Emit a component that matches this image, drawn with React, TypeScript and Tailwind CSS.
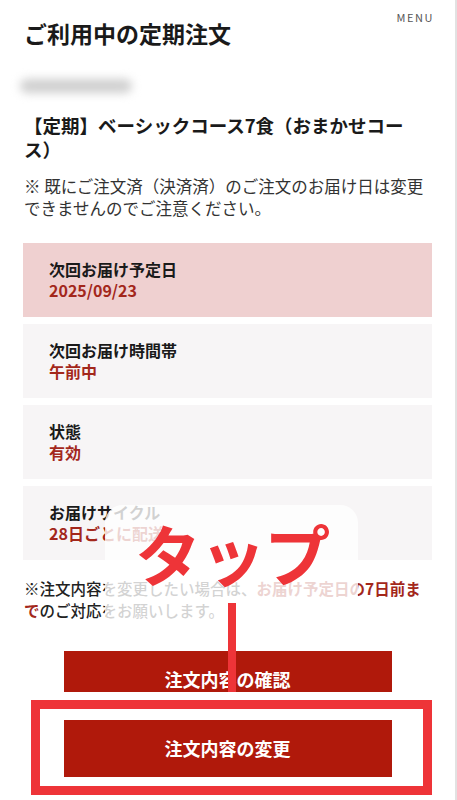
import React from "react";

type Row = { label: string; value: string; highlight?: boolean };

const rows: Row[] = [
  { label: "次回お届け予定日", value: "2025/09/23", highlight: true },
  { label: "次回お届け時間帯", value: "午前中" },
  { label: "状態", value: "有効" },
  { label: "お届けサイクル", value: "28日ごとに配送" },
];

const jp = { fontFamily: '"Noto Sans CJK JP", "Noto Sans", sans-serif' };

export default function App() {
  return (
    <div
      className="relative w-[457px] h-[800px] overflow-hidden bg-white border-r-2 border-[#e2e2e2] text-[#222]"
      style={jp}
    >
      {/* Header */}
      <div className="relative px-6">
        <span className="absolute top-[11px] right-[21px] text-[11px] leading-[12px] tracking-[0.14em] text-[#555]">
          MENU
        </span>
        <h1 className="pt-[20px] text-[23px] leading-[26px] font-bold text-[#1a1a1a]">
          ご利用中の定期注文
        </h1>
      </div>

      <div className="px-6">
        {/* order number (masked) */}
        <div className="mt-[33px] -ml-1 w-[112px] h-[14px] rounded-full bg-[#cfcfcf] blur-[5px]" />

        <h2 className="mt-[20px] w-[390px] text-[18.5px] leading-[24px] font-bold text-[#1a1a1a]">
          【定期】ベーシックコース7食（おまかせコース）
        </h2>

        <p className="mt-[14px] text-[16.5px] leading-[22px] text-[#333]">
          ※ 既にご注文済（決済済）のご注文のお届け日は変更できませんのでご注意ください。
        </p>
      </div>

      {/* Subscription details */}
      <div className="mt-[24px] mx-[23px] flex flex-col gap-[7px]">
        {rows.map((r) => (
          <div
            key={r.label}
            className={`h-[74px] pl-[26px] py-4 ${r.highlight ? "bg-[#efd0d0]" : "bg-[#f7f5f6]"}`}
          >
            <div className="text-[16px] leading-[21px] font-bold text-[#1a1a1a]">{r.label}</div>
            <div className="text-[16px] leading-[21px] font-bold text-[#a3271b]">{r.value}</div>
          </div>
        ))}
      </div>

      <p className="mt-[17px] ml-6 w-[425px] text-[15.5px] leading-[22px] font-medium text-[#222] whitespace-nowrap">
        ※注文内容を変更したい場合は、
        <span className="font-bold text-[#a3271b]">
          お届け予定日の7日前ま
          <br />で
        </span>
        のご対応をお願いします。
      </p>

      {/* Actions */}
      <div className="mt-[30px] flex flex-col items-center gap-3">
        <button className="w-[328px] h-[57px] bg-[#b0190b] text-white text-[18px] font-bold">
          注文内容の確認
        </button>
        <button className="w-[328px] h-[57px] bg-[#b0190b] text-white text-[18px] font-bold">
          注文内容の変更
        </button>
      </div>

      {/* Tap callout */}
      <div className="absolute left-[105px] top-[505px] w-[253px] h-[125px] rounded-[18px] bg-white/80" />
      <div className="absolute left-[135px] top-[519px] text-[66px] leading-none font-bold text-[#ee3438] tracking-[-0.02em]">
        タップ
      </div>
      <div className="absolute left-[228px] top-[603px] w-[8px] h-[97px] bg-[#ee3438]" />
      <div className="absolute left-[23px] top-[692px] w-[417px] h-[111px] border-8 border-white">
        <div className="w-full h-full border-[9px] border-[#ee3438]" />
      </div>
    </div>
  );
}
